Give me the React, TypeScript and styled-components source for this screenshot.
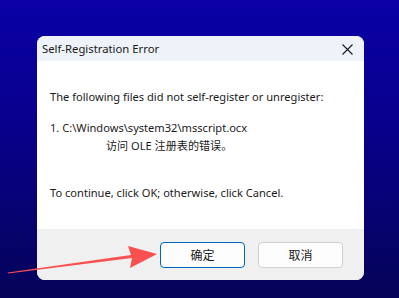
import styled, { createGlobalStyle } from 'styled-components';

const GlobalStyle = createGlobalStyle`
    html, body {
        margin: 0;
        padding: 0;
    }
    body {
        width: 399px;
        height: 298px;
        overflow: hidden;
        font-family: "Noto Sans", "Noto Sans CJK SC", sans-serif;
    }
`;

const App = () => {
    return (
        <>
            <GlobalStyle />
            <Desktop>
                <Dialog>
                    <TitleBar>
                        <Title>Self-Registration Error</Title>
                        <CloseButton aria-label="close">
                            <svg width="11" height="11" viewBox="0 0 11 11">
                                <path d="M0.5 0.5 L10.5 10.5 M10.5 0.5 L0.5 10.5" stroke="#1a1a1a" strokeWidth="1.1" />
                            </svg>
                        </CloseButton>
                    </TitleBar>
                    <Body>
                        <Line>The following files did not self-register or unregister:</Line>
                        <Line $top={15}>1. C:\Windows\system32\msscript.ocx</Line>
                        <Line $top={2} $indent={56}>访问 OLE 注册表的错误。</Line>
                        <Line $top={31}>To continue, click OK; otherwise, click Cancel.</Line>
                    </Body>
                    <Footer>
                        <Button $primary>确定</Button>
                        <Button>取消</Button>
                    </Footer>
                </Dialog>
                <Arrow width="399" height="298" viewBox="0 0 399 298">
                    <polygon points="8,273.5 132,258 130,268 157,254 128,246 131,255 8,272.5" fill="#fa5050" />
                </Arrow>
            </Desktop>
        </>
    );
};

const Desktop = styled.div`
    position: relative;
    width: 399px;
    height: 298px;
    box-sizing: border-box;
    padding: 36px 35px 0 37px;
    background: linear-gradient(180deg, #0a00a6 0%, #07008a 45%, #050458 100%);
`;

const Dialog = styled.div`
    width: 327px;
    height: 244px;
    border-radius: 8px;
    overflow: hidden;
    display: flex;
    flex-direction: column;
    background: #ffffff;
`;

const TitleBar = styled.div`
    height: 25px;
    display: flex;
    align-items: center;
    justify-content: space-between;
    padding: 0 10px 0 5px;
    background: #eef2f9;
`;

const Title = styled.span`
    font-size: 11.3px;
    color: #1a1a1a;
`;

const CloseButton = styled.div`
    display: flex;
    align-items: center;
    justify-content: center;
    width: 14px;
    height: 14px;
    margin-top: 1px;
`;

const Body = styled.div`
    flex: 1;
    padding: 28px 13px 0 13px;
    background: #ffffff;
`;

const Line = styled.div<{ $top?: number; $indent?: number }>`
    font-size: 11.1px;
    line-height: 16px;
    color: #1a1a1a;
    white-space: nowrap;
    margin-top: ${(p) => p.$top ?? 0}px;
    padding-left: ${(p) => p.$indent ?? 0}px;
`;

const Footer = styled.div`
    height: 51px;
    box-sizing: border-box;
    display: flex;
    justify-content: flex-end;
    align-items: flex-start;
    gap: 13px;
    padding: 13px 21px 0 0;
    background: #f0f0f0;
`;

const Button = styled.div<{ $primary?: boolean }>`
    width: 85px;
    height: 26px;
    box-sizing: border-box;
    border-radius: 4px;
    display: flex;
    align-items: center;
    justify-content: center;
    font-size: 12px;
    color: #1a1a1a;
    background: #fdfdfd;
    border: ${(p) => (p.$primary ? '1.5px solid #0067c0' : '1px solid #d0d0d0')};
`;

const Arrow = styled.svg`
    position: absolute;
    left: 0;
    top: 0;
    pointer-events: none;
`;

export default App;
